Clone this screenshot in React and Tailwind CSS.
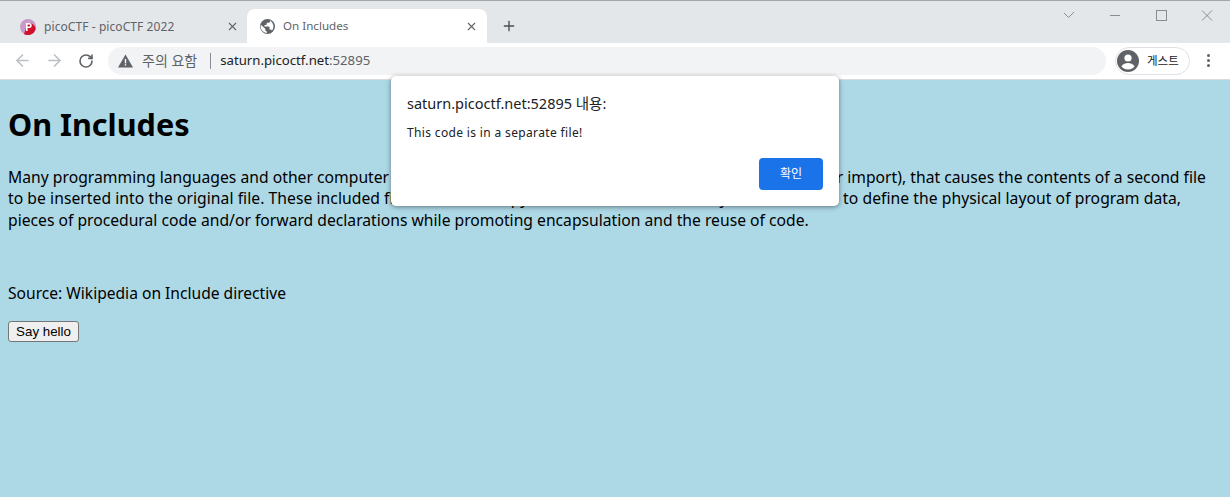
import { ArrowLeft, ArrowRight, RotateCw, X, Plus } from 'lucide-react';

const uiFont = "font-['Noto_Sans','Noto_Sans_CJK_KR',sans-serif]";

const Favicon = () => (
  <svg width="16" height="16" viewBox="0 0 16 16">
    <circle cx="8" cy="8" r="8" fill="#c89ac8" />
    <path d="M8 4a6.5 6.5 0 0 1 7.6 6.5A8 8 0 0 1 4 15Z" fill="#d0112b" />
    <path d="M6 4h3.2a2.5 2.5 0 0 1 0 5H7.6v3H6Z M7.6 5.4v2.2h1.4a1.1 1.1 0 0 0 0-2.2Z" fill="#fff" fillRule="evenodd" />
  </svg>
);

const Globe = () => (
  <svg width="15" height="15" viewBox="0 0 24 24">
    <circle cx="12" cy="12" r="12" fill="#5f6368" />
    <path fill="#fff" d="M1.4 9.2 8.4 15.6v1.6c0 1.3 1.1 2.4 2.4 2.4v3.2A11 11 0 0 1 1.4 9.2Z" />
    <path fill="#fff" d="M16 2.2v1.4c0 1.3-1.1 2.4-2.4 2.4h-2.8v2.4c0 .7-.5 1.2-1.2 1.2H7.2v2.4H14c.7 0 1.2.5 1.2 1.2v3.6h1.6c1.1 0 2 .7 2.3 1.7A11 11 0 0 0 16 2.2Z" />
  </svg>
);

const Avatar = () => (
  <svg width="22" height="22" viewBox="0 0 22 22">
    <circle cx="11" cy="11" r="11" fill="#5f6368" />
    <circle cx="11" cy="8" r="3.6" fill="#fff" />
    <path d="M4.4 16.2C6 13.8 8.6 13 11 13s5 .8 6.6 3.2A8.6 8.6 0 0 1 11 19.4a8.6 8.6 0 0 1-6.6-3.2Z" fill="#fff" />
  </svg>
);

const WarnIcon = () => (
  <svg width="15" height="14" viewBox="0 0 15 14">
    <path d="M7.5 0.5 15 13.5H0Z" fill="#5f6368" />
    <rect x="6.8" y="5" width="1.4" height="4.4" fill="#fff" />
    <rect x="6.8" y="10.2" width="1.4" height="1.4" fill="#fff" />
  </svg>
);

const WindowControls = () => (
  <svg width="150" height="12" viewBox="0 0 150 12" fill="none" stroke="#8a8d91" strokeWidth="1">
    <path d="M-1 3 4.5 8.5 10 3" />
    <path d="M46 6.5h10" />
    <rect x="92.5" y="1.5" width="10" height="10" />
    <path d="M138 1.5 148 11.5M148 1.5 138 11.5" />
  </svg>
);

const App = () => {
  return (
    <div className={`relative h-[497px] w-[1230px] overflow-hidden bg-[#add8e6] ${uiFont}`}>
      <div className="flex h-[43px] border-t border-[#a3a5a8] bg-[#e4e7ea]">
        <div className="flex w-[247px] items-start pl-[20px] pr-[8px] pt-[8px]">
          <div className="flex h-[35px] w-full items-center">
            <Favicon />
            <span className="ml-[8px] flex-1 text-[12px] tracking-[0.08px] text-[#5f6368]">picoCTF - picoCTF 2022</span>
            <X size={13} strokeWidth={2} className="text-[#5f6368]" />
          </div>
        </div>
        <div className="mt-[8px] flex h-[34px] w-[240px] items-center rounded-t-[8px] bg-white pl-[13px] pr-[9px]">
          <Globe />
          <span className="ml-[8px] flex-1 text-[11.6px] text-[#5f6368]">On Includes</span>
          <X size={13} strokeWidth={2} className="text-[#5f6368]" />
        </div>
        <div className="ml-[14px] mt-[17px] h-[16px]">
          <Plus size={16} strokeWidth={2} className="text-[#4a4d51]" />
        </div>
        <div className="ml-auto mr-[16px] mt-[8px] h-[12px]">
          <WindowControls />
        </div>
      </div>

      <div className="flex h-[37px] items-center border-b border-[#d9dbde] bg-white pb-[1px]">
        <ArrowLeft size={19} strokeWidth={2} className="ml-[13px] text-[#bcbfc3]" />
        <ArrowRight size={19} strokeWidth={2} className="ml-[13px] text-[#bcbfc3]" />
        <RotateCw size={16} strokeWidth={2.4} className="ml-[14px] text-[#5f6368]" />
        <div className="ml-[14px] flex h-[28px] w-[998px] items-center rounded-full bg-[#f1f3f4] pl-[10px]">
          <WarnIcon />
          <span className="ml-[9px] text-[14px] text-[#5f6368]">주의 요함</span>
          <span className="ml-[13px] h-[16px] w-px bg-[#8a8d91]" />
          <span className="ml-[9px] text-[13.2px] text-[#202124]">saturn.picoctf.net<span className="text-[#5f6368]">:52895</span></span>
        </div>
        <div className="ml-[9px] flex h-[28px] w-[75px] items-center rounded-full border border-[#dfe1e5] pl-[1px]">
          <Avatar />
          <span className="ml-[8px] text-[11.5px] text-[#202124]">게스트</span>
        </div>
        <div className="ml-[17px] flex flex-col gap-[2px]">
          <span className="h-[3px] w-[3px] rounded-full bg-[#5f6368]" />
          <span className="h-[3px] w-[3px] rounded-full bg-[#5f6368]" />
          <span className="h-[3px] w-[3px] rounded-full bg-[#5f6368]" />
        </div>
      </div>

      <div className="px-[8px] text-black">
        <h1 className="mt-[20px] text-[30.6px] leading-[48px] font-bold">On Includes</h1>
        <p className="mt-[19px] text-[15.68px] leading-[21.3px]">
          <span className="tracking-[0.015px]">Many programming languages and other computer files have a directive, often called include (sometimes copy or import), that causes the contents of a second file</span><br />
          <span className="tracking-[0.05px]">to be inserted into the original file. These included files are called copybooks or header files. They are often used to define the physical layout of program data,</span><br />
          pieces of procedural code and/or forward declarations while promoting encapsulation and the reuse of code.
        </p>
        <p className="mt-[52px] text-[15.6px] leading-[21px]">Source: Wikipedia on Include directive</p>
        <button className="mt-[17px] block h-[21px] w-[71px] rounded-[3px] border border-[#767676] bg-[#efefef] font-['Liberation_Sans',sans-serif] text-[13.33px] leading-none text-black">
          Say hello
        </button>
      </div>

      <div className="absolute left-[391px] top-[76px] h-[130px] w-[448px] rounded-[5px] bg-white px-[16px] pt-[16px] shadow-[0_1px_5px_rgba(0,0,0,0.45)]">
        <div className="text-[14.5px] leading-[22px] text-[#202124]">saturn.picoctf.net:52895 내용:</div>
        <div className="mt-[10px] text-[12px] leading-[18px] tracking-[0.35px] text-[#202124]">This code is in a separate file!</div>
        <button className="absolute bottom-[16px] right-[16px] h-[32px] w-[64px] rounded-[4px] bg-[#1a73e8] text-[12px] text-white">확인</button>
      </div>
    </div>
  );
};

export default App;
